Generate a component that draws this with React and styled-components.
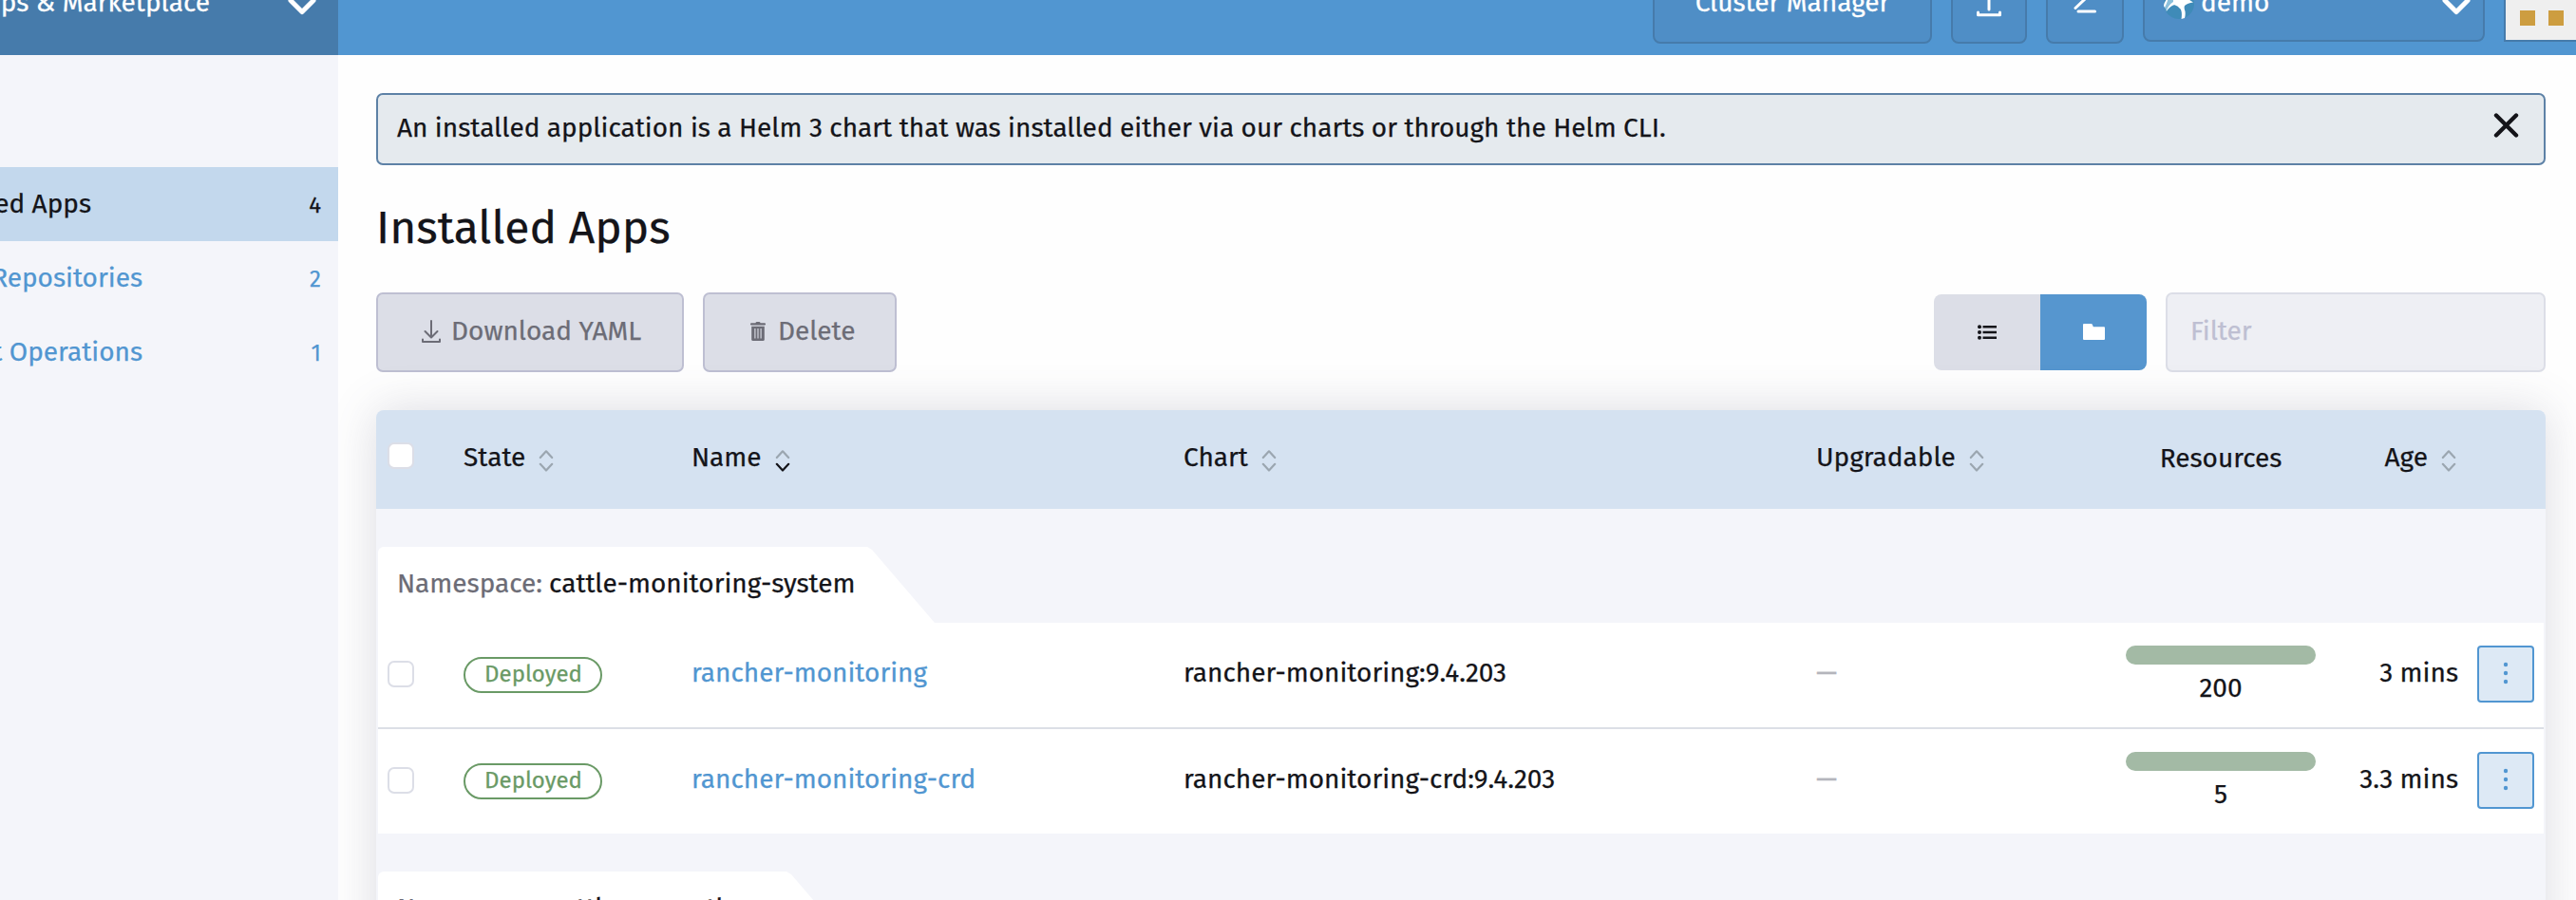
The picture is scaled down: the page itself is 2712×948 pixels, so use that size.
import React from 'react';
import styled, { createGlobalStyle } from 'styled-components';

const GlobalStyle = createGlobalStyle`
  * { box-sizing: border-box; }
  body { margin: 0; overflow: hidden; background: #fefefe; }
  svg { flex: none; display: block; }
`;

const Page = styled.div`
  width: 2712px; height: 948px; overflow: hidden;
  display: grid; grid-template: 58px 890px / 356px 1fr;
  font: 28px/40px "Fira Sans", "Noto Sans", sans-serif;
  -webkit-text-stroke: 0.25px currentColor;
  color: #141419; background: #fefefe;
`;

const Label = styled.span`
  display: inline-block; white-space: nowrap;
  font-size: ${p => p.$size ?? 28}px;
  color: ${p => p.$color ?? 'inherit'};
`;

const ProductMenu = styled.div`
  background: #467bab; color: #fff; overflow: hidden;
  display: flex; justify-content: space-between; align-items: flex-start;
  padding-right: 22px;
  & > * { margin-top: -17px; }
`;
const Header = styled.header`
  background: #5196d1; color: #fff; overflow: hidden;
  display: flex; justify-content: flex-end; align-items: flex-start; gap: 20px;
`;
const HeaderButton = styled.div`
  width: ${p => p.$w}px; height: 84px; margin-top: ${p => p.$top ?? -38}px;
  border: 2px solid #467bab; border-radius: 8px; background: #4f8ec6;
  display: flex; justify-content: center; align-items: flex-start; padding-top: 19px;
`;
const ClusterSelect = styled(HeaderButton)`
  justify-content: space-between; padding: 21px 12px 0 20px;
`;
const ClusterName = styled.div`display: flex; gap: 7px;`;
const Avatar = styled.div`
  width: 76px; height: 84px; margin-top: -40px; padding: 49px 0 0 15px;
  border: 2px solid #467bab; border-right: 0; background: #efefef;
  display: flex; gap: 14px;
`;
const AvatarPixel = styled.i`width: 16px; height: 16px; background: #cd9d40;`;

const Sidebar = styled.nav`background: #f4f5fa; padding-top: 118px;`;
const NavItem = styled.div`
  height: 78px; padding: 19px 18px 0 0; display: flex; align-items: baseline;
  justify-content: space-between; overflow: hidden;
  background: ${p => (p.$active ? '#c3d8ed' : 'transparent')};
  color: ${p => (p.$active ? '#141419' : '#5196d1')};
`;
const NavText = styled.div`width: ${p => p.$w}px; display: flex; justify-content: flex-end;`;

const Main = styled.main`
  padding: 40px 32px 0 40px; display: flex; flex-direction: column; overflow: hidden;
  & > * { flex: none; }
`;
const Banner = styled.div`
  height: 76px; border: 2px solid #5d81a6; border-radius: 7px; background: #e5eaee;
  display: flex; justify-content: space-between; align-items: flex-start;
  padding: 15px 26px 0 20px;
  & > svg { margin-top: 4px; }
`;
const Title = styled.h1`
  margin: 30px 0 0; height: 72px; font-size: 48px; line-height: 72px; font-weight: 400;
`;
const Toolbar = styled.div`
  margin-top: 32px; height: 84px; display: flex; align-items: center;
`;
const BulkButton = styled.div`
  width: ${p => p.$w}px; height: 84px; margin-right: 20px; padding-left: ${p => p.$pad}px;
  border: 2px solid #bebfd2; border-radius: 7px; background: #dcdee7; color: #6c6c76;
  display: flex; align-items: center; gap: ${p => p.$gap}px; padding-bottom: 2px;
`;
const ViewToggle = styled.div`
  display: flex; margin: 0 20px 0 auto; border-radius: 8px; overflow: hidden;
`;
const ToggleSide = styled.div`
  width: 112px; height: 80px; display: grid; place-items: center; padding-bottom: 1px;
  background: ${p => (p.$on ? '#5696cf' : '#dcdee7')};
`;
const FilterBox = styled.div`
  width: 400px; height: 84px; border: 2px solid #dcdee7; border-radius: 7px;
  background: #eeeff4; color: #bebfd2; padding: 19px 24px;
`;

const Table = styled.section`
  margin-top: 40px; height: 640px; border-radius: 8px 8px 0 0; background: #f4f5fa;
  box-shadow: 0 0 50px rgba(80, 80, 110, 0.2);
`;
const columns = '240px 518px 666px 326px 200px 170px 1fr';
const HeadRow = styled.div`
  height: 104px; background: #d5e2f1; border-radius: 8px 8px 0 0;
  display: grid; grid-template-columns: 92px ${columns};
`;
const HeadCell = styled.div`
  display: flex; align-items: flex-start; gap: 14px; padding-top: ${p => (p.$low ? 31 : 30)}px;
  justify-content: ${p => p.$align ?? 'flex-start'};
  padding-right: ${p => p.$right ?? 0}px;
  & > svg { margin-top: 11px; }
`;
const Group = styled.div`padding: 40px 2px 0;`;
const GroupTab = styled.div`
  height: 80px; width: ${p => p.$w}px; padding: 19px 0 0 20px; background: #fff;
  border-top-left-radius: 6px;
  clip-path: polygon(0 0, calc(100% - 71px) 0, calc(100% - 66px) 3px, 100% 100%, 0 100%);
  display: flex; gap: 7px;
`;
const Row = styled.div`
  height: ${p => (p.$last ? 110 : 112)}px; background: #fff;
  border-bottom: ${p => (p.$last ? 0 : '2px solid #dcdfe6')};
  display: grid; grid-template-columns: 90px ${columns};
`;
const Cell = styled.div`
  padding: ${p => p.$top ?? 33}px ${p => p.$right ?? 0}px 0 0;
  text-align: ${p => p.$align ?? 'left'};
`;
const Checkbox = styled.div`
  width: 28px; height: 28px; border: 2px solid #dcdee7; border-radius: 7px; background: #fff;
  margin: ${p => p.$top}px 0 0 ${p => p.$left}px;
`;
const StateBadge = styled.div`
  width: 146px; height: 38px; border: 2px solid #6a9a66; border-radius: 19px; color: #6a9a66;
  font-size: 24px; line-height: 32px; text-align: center; padding-left: 1px;
`;
const ResourceBar = styled.div`
  width: 200px; height: 20px; border-radius: 10px; background: #a3baa5; margin-bottom: 5px;
`;
const ActionButton = styled.div`
  width: 60px; height: 60px; border: 2px solid #5196d1; border-radius: 4px; background: #dde9f5;
  display: grid; place-items: center; padding-bottom: 2px;
`;

const Chevron = () => (
  <svg width="32" height="36" viewBox="0 0 32 36" fill="none" stroke="#fff" strokeWidth="5" strokeLinecap="round" strokeLinejoin="round">
    <path d="M4 17.5L16 29.5L28 17.5" />
  </svg>
);
const CloseIcon = () => (
  <svg width="27" height="26" viewBox="0 0 27 26" stroke="#141419" strokeWidth="4.4" strokeLinecap="round">
    <path d="M3 2.5L24 23.5M24 2.5L3 23.5" />
  </svg>
);
const SortIcon = ({ active }) => (
  <svg width="16" height="24" viewBox="0 0 16 24" fill="none" strokeWidth="2.2" strokeLinecap="round" strokeLinejoin="round">
    <path d="M1.8 9L8 2.3L14.2 9" stroke="#9ba6b0" />
    <path d="M1.8 15.8L8 22.5L14.2 15.8" stroke={active ? '#141419' : '#9ba6b0'} />
  </svg>
);
const DownloadIcon = () => (
  <svg width="20" height="24" viewBox="0 0 20 24" fill="none" stroke="#6c6c76" strokeWidth="2" strokeLinecap="round" strokeLinejoin="round">
    <path d="M10 1V18M3.5 12L10 18.5L16.5 12M1 20.5V23H19V20.5" />
  </svg>
);
const TrashIcon = () => (
  <svg width="16" height="20" viewBox="0 0 16 20" fill="#6c6c76">
    <path d="M5.5 1.2C5.5 .3 6 0 8 0s2.5.3 2.5 1.2H15a1 1 0 0 1 0 2.3H1a1 1 0 0 1 0-2.3Z" />
    <path d="M1.2 4.8H14.8V18.5Q14.8 20 13.3 20H2.7Q1.2 20 1.2 18.5Z" />
    <path d="M4.9 7V17.5M8 7V17.5M11.1 7V17.5" stroke="#dcdee7" strokeWidth="1.1" />
  </svg>
);
const ListIcon = () => (
  <svg width="20" height="16" viewBox="0 0 20 16" fill="#141419">
    <circle cx="2" cy="2.3" r="2" /><circle cx="2" cy="8" r="2" /><circle cx="2" cy="13.7" r="2" />
    <path d="M5.5 1.1H20V3.5H5.5ZM5.5 6.8H20V9.2H5.5ZM5.5 12.5H20V14.9H5.5Z" />
  </svg>
);
const FolderIcon = () => (
  <svg width="23" height="17" viewBox="0 0 23 17" fill="#fff">
    <path d="M1 0H8.5Q9.5 0 10 1.2L10.8 3.2H22Q23 3.2 23 4.2V16Q23 17 22 17H1Q0 17 0 16V1Q0 0 1 0Z" />
  </svg>
);
const UploadIcon = () => (
  <svg width="28" height="40" viewBox="0 0 28 40" fill="none" stroke="#fff" strokeWidth="3" strokeLinecap="round" strokeLinejoin="round">
    <path d="M14 27V7M6 14L14 6L22 14M2.5 30V32.8H25.5V30" />
  </svg>
);
const ShellIcon = () => (
  <svg width="24" height="40" viewBox="0 0 24 40" fill="none" stroke="#fff" strokeWidth="3" strokeLinecap="round">
    <path d="M2 7L11.5 16.5L2 25.5M5 29H22.5" />
  </svg>
);
const ClusterLogo = () => (
  <svg width="32" height="40" viewBox="0 0 32 40">
    <circle cx="16" cy="21" r="16" fill="#3f8bb8" />
    <path d="M0 23Q2 15 10 17L12 22Q7 23 3 29Z" fill="#8cc0db" />
    <path d="M0 23Q1 17 5 15Q3 21 1 25ZM10 15Q18 10 31 19.5Q25 20 22 23Q21 25 22.5 29Q23 33 22 36L18.5 37Q19.5 31 18 27Q15 23 11 22Q7 23 2.5 29Q5 22 10 19Z" fill="#fff" />
  </svg>
);
const DotsIcon = () => (
  <svg width="8" height="24" viewBox="0 0 8 24" fill="#5196d1">
    <circle cx="4" cy="3" r="2.2" /><circle cx="4" cy="12" r="2.2" /><circle cx="4" cy="21" r="2.2" />
  </svg>
);

const nav = [
  { text: 'Installed Apps', count: 4, w: 96, active: true },
  { text: 'Chart Repositories', count: 2, w: 150 },
  { text: 'Recent Operations', count: 1, w: 150 },
];
const apps = [
  { name: 'rancher-monitoring', chart: 'rancher-monitoring:9.4.203', resources: 200, age: '3 mins' },
  { name: 'rancher-monitoring-crd', chart: 'rancher-monitoring-crd:9.4.203', resources: 5, age: '3.3 mins' },
];

const AppRow = ({ app, last }) => (
  <Row $last={last}>
    <Cell $top={0}><Checkbox $top={40} $left={10} /></Cell>
    <Cell $top={36}><StateBadge>Deployed</StateBadge></Cell>
    <Cell><Label $color="#5196d1">{app.name}</Label></Cell>
    <Cell><Label>{app.chart}</Label></Cell>
    <Cell><Label $color="#b4b5bc">—</Label></Cell>
    <Cell $top={24} $align="center"><ResourceBar /><Label>{app.resources}</Label></Cell>
    <Cell $align="right" $right={20}><Label>{app.age}</Label></Cell>
    <Cell $top={24}><ActionButton><DotsIcon /></ActionButton></Cell>
  </Row>
);

export default function App() {
  return (
    <>
      <GlobalStyle />
      <Page>
        <ProductMenu>
          <NavText $w={221}><Label>Apps &amp; Marketplace</Label></NavText>
          <Chevron />
        </ProductMenu>
        <Header>
          <HeaderButton $w={294}><Label>Cluster Manager</Label></HeaderButton>
          <HeaderButton $w={80}><UploadIcon /></HeaderButton>
          <HeaderButton $w={82}><ShellIcon /></HeaderButton>
          <ClusterSelect $w={360} $top={-40}>
            <ClusterName><ClusterLogo /><Label>demo</Label></ClusterName>
            <Chevron />
          </ClusterSelect>
          <Avatar><AvatarPixel /><AvatarPixel /></Avatar>
        </Header>
        <Sidebar>
          {nav.map(n => (
            <NavItem key={n.text} $active={n.active}>
              <NavText $w={n.w}><Label>{n.text}</Label></NavText>
              <Label $size={24}>{n.count}</Label>
            </NavItem>
          ))}
        </Sidebar>
        <Main>
          <Banner>
            <Label>An installed application is a Helm 3 chart that was installed either via our charts or through the Helm CLI.</Label>
            <CloseIcon />
          </Banner>
          <Title>Installed Apps</Title>
          <Toolbar>
            <BulkButton $w={324} $pad={46} $gap={11}><DownloadIcon /><Label>Download YAML</Label></BulkButton>
            <BulkButton $w={204} $pad={48} $gap={13}><TrashIcon /><Label>Delete</Label></BulkButton>
            <ViewToggle>
              <ToggleSide><ListIcon /></ToggleSide>
              <ToggleSide $on><FolderIcon /></ToggleSide>
            </ViewToggle>
            <FilterBox><Label>Filter</Label></FilterBox>
          </Toolbar>
          <Table>
            <HeadRow>
              <div><Checkbox $top={34} $left={12} /></div>
              <HeadCell><Label>State</Label><SortIcon /></HeadCell>
              <HeadCell><Label>Name</Label><SortIcon active /></HeadCell>
              <HeadCell><Label>Chart</Label><SortIcon /></HeadCell>
              <HeadCell><Label>Upgradable</Label><SortIcon /></HeadCell>
              <HeadCell $align="center" $low><Label>Resources</Label></HeadCell>
              <HeadCell $align="flex-end" $right={22}><Label>Age</Label><SortIcon /></HeadCell>
            </HeadRow>
            <Group>
              <GroupTab $w={586}><Label $color="#6c6c76">Namespace:</Label><Label>cattle-monitoring-system</Label></GroupTab>
              <AppRow app={apps[0]} />
              <AppRow app={apps[1]} last />
            </Group>
            <Group>
              <GroupTab $w={501}><Label $color="#6c6c76">Namespace:</Label><Label>cattle-prometheus</Label></GroupTab>
            </Group>
          </Table>
        </Main>
      </Page>
    </>
  );
}
